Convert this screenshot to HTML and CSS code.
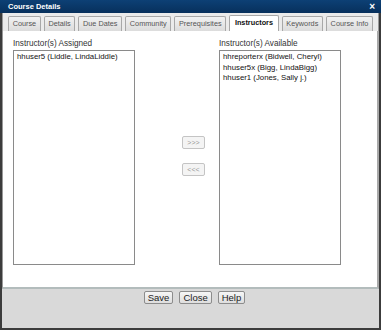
FILE: index.html
```html
<!DOCTYPE html>
<html lang="en">
<head>
    <meta charset="UTF-8">
    <title>Course Details</title>
    <link rel="stylesheet" href="styles.css">
</head>
<body>
    <div class="dialog">
        <div class="titlebar">
            <span class="title">Course Details</span>
            <span class="close">&#215;</span>
        </div>

        <div class="tabs">
            <div class="tab">Course</div>
            <div class="tab">Details</div>
            <div class="tab">Due Dates</div>
            <div class="tab">Community</div>
            <div class="tab">Prerequisites</div>
            <div class="tab active">Instructors</div>
            <div class="tab">Keywords</div>
            <div class="tab">Course Info</div>
        </div>

        <div class="panel">
            <div class="col">
                <div class="col-label">Instructor(s) Assigned</div>
                <div class="listbox">
                    <div class="item">hhuser5 (Liddle, LindaLiddle)</div>
                </div>
            </div>

            <div class="mover">
                <button class="move-btn">&gt;&gt;&gt;</button>
                <button class="move-btn">&lt;&lt;&lt;</button>
            </div>

            <div class="col">
                <div class="col-label">Instructor(s) Available</div>
                <div class="listbox">
                    <div class="item">hhreporterx (Bidwell, Cheryl)</div>
                    <div class="item">hhuser5x (Bigg, LindaBigg)</div>
                    <div class="item">hhuser1 (Jones, Sally j.)</div>
                </div>
            </div>
        </div>

        <div class="footer">
            <button class="btn">Save</button>
            <button class="btn">Close</button>
            <button class="btn">Help</button>
        </div>
    </div>
</body>
</html>
```

FILE: styles.css
```css
:root {
    --navy: #0a3766;
    --frame: #3c3c3c;
    --tab: #e2e2e2;
    --line: #a8a8a8;
    --foot: #d9d9d9;
}

body {
    margin: 0;
    background: #fff;
    font-family: 'Liberation Sans', Arial, sans-serif;
}

.dialog {
    width: 381px;
    height: 330px;
    box-sizing: border-box;
    border: 2px solid var(--frame);
    border-top: none;
    display: flex;
    flex-direction: column;
    background: #e6e6e6;
}

.titlebar {
    height: 13px;
    margin: 0 -2px;
    padding: 0 6px 0 8px;
    background: linear-gradient(#0d4075, #07305c);
    color: #fff;
    display: flex;
    align-items: center;
    justify-content: space-between;
    flex-shrink: 0;
}

.title {
    font-size: 7.5px;
    font-weight: 700;
}

.close {
    font-size: 10px;
    font-weight: 700;
    line-height: 1;
}

.tabs {
    display: flex;
    gap: 3px;
    padding: 3px 5px 0 5px;
    height: 15px;
    flex-shrink: 0;
    background: #ebebeb;
    border-left: 1px solid #999;
    border-right: 1px solid #999;
}

.tab {
    flex: 1 1 auto;
    text-align: center;
    font-size: 7.3px;
    line-height: 13px;
    color: #555;
    background: linear-gradient(#f2f2f2, #dcdcdc);
    border: 1px solid var(--line);
    border-bottom: none;
    border-radius: 2px 2px 0 0;
    padding: 0 3px;
}

.tab.active {
    background: #fff;
    color: #111;
    font-weight: 700;
    height: 15px;
    margin-top: -1px;
    padding: 0 4px;
}

.panel {
    flex: 1;
    background: #fff;
    display: flex;
    padding: 8px 0 0 10px;
    border-left: 1px solid #999;
    border-right: 2px solid #a9a9a9;
    border-bottom: 2px solid #b3bcbc;
}

.col {
    display: flex;
    flex-direction: column;
    width: 122px;
}

.col-label {
    font-size: 8.2px;
    color: #333;
    height: 11px;
    line-height: 10px;
}

.listbox {
    height: 215px;
    box-sizing: border-box;
    border: 1px solid #8a8a8a;
    padding: 1px 3px;
}

.item {
    font-size: 7.8px;
    line-height: 10.5px;
    color: #111;
    white-space: nowrap;
}

.mover {
    width: 84px;
    display: flex;
    flex-direction: column;
    align-items: flex-end;
    padding: 97px 14px 0 0;
    box-sizing: border-box;
    gap: 14px;
}

.move-btn {
    width: 23px;
    height: 13px;
    padding: 0;
    font-family: inherit;
    font-size: 7px;
    color: #9a9a9a;
    background: #f4f4f4;
    border: 1px solid #c4c4c4;
    border-radius: 2px;
}

.footer {
    height: 39px;
    flex-shrink: 0;
    background: var(--foot);
    display: flex;
    justify-content: center;
    align-items: flex-start;
    gap: 6px;
    padding: 2px 0 0 8px;
    box-sizing: border-box;
}

.btn {
    height: 13px;
    padding: 0 3px;
    font-family: inherit;
    font-size: 9.5px;
    line-height: 11px;
    color: #222;
    background: linear-gradient(#f6f6f6, #dedede);
    border: 1px solid #8c8c8c;
    border-radius: 2px;
}
```
